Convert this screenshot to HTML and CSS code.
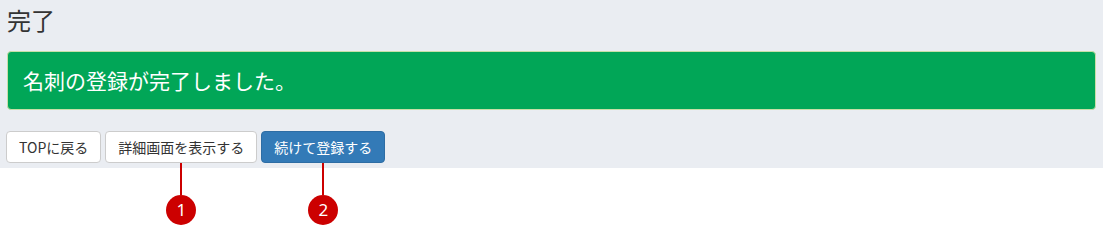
FILE: index.html
```html
<!DOCTYPE html>
<html lang="ja">
<head>
<meta charset="utf-8">
<title>完了</title>
<link rel="stylesheet" href="styles.css">
</head>
<body>
<div class="panel">
  <h1 class="title">完了</h1>
  <div class="alert">名刺の登録が完了しました。</div>
  <div class="actions">
    <span class="btn-wrap"><button class="btn btn-default">TOPに戻る</button></span>
    <span class="btn-wrap"><button class="btn btn-default">詳細画面を表示する</button><span class="marker"><span class="marker-line"></span><span class="marker-dot">1</span></span></span>
    <span class="btn-wrap"><button class="btn btn-primary">続けて登録する</button><span class="marker"><span class="marker-line"></span><span class="marker-dot">2</span></span></span>
  </div>
</div>
</body>
</html>
```
FILE: styles.css
```css
html, body {
  margin: 0;
  padding: 0;
  background: #ffffff;
}
body {
  min-height: 225px;
  font-family: "Noto Sans CJK JP", "Noto Sans", sans-serif;
  color: #333333;
}
.panel {
  background: #eaedf2;
  padding: 5px 6px 5px 6px;
}
.title {
  margin: 0 0 16px 1px;
  font-size: 24px;
  font-weight: 400;
  line-height: 30px;
  color: #333333;
}
.alert {
  margin-left: 1px;
  margin-right: 1px;
  background: #01a657;
  border: 1px solid #c8dfa8;
  border-radius: 4px;
  color: #ffffff;
  font-size: 21px;
  line-height: 27px;
  padding: 15px 15px;
}
.actions {
  display: flex;
  gap: 4px;
  margin-top: 21px;
}
.btn-wrap {
  position: relative;
  display: block;
}
.btn {
  display: block;
  font-family: "Noto Sans CJK JP", "Noto Sans", sans-serif;
  font-size: 14px;
  line-height: 20px;
  padding: 5px 12px;
  border: 1px solid #cccccc;
  border-radius: 4px;
  background: #ffffff;
  color: #333333;
  cursor: pointer;
}
.btn-primary {
  background: #337ab7;
  border-color: #2e6da4;
  color: #ffffff;
}
.marker {
  position: absolute;
  top: 100%;
  left: 50%;
  width: 30px;
  margin-left: -15px;
  display: flex;
  flex-direction: column;
  align-items: center;
  z-index: 2;
}
.marker-line {
  width: 2px;
  height: 32px;
  background: #cc0000;
}
.marker-dot {
  width: 30px;
  height: 30px;
  border-radius: 50%;
  background: #cc0000;
  color: #ffffff;
  font-family: "Noto Sans", "Liberation Sans", sans-serif;
  font-size: 17px;
  line-height: 30px;
  text-align: center;
}
```
